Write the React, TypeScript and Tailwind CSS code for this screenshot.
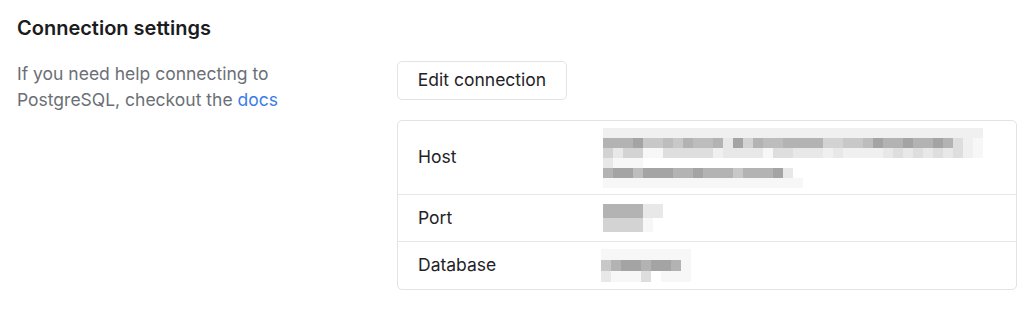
import React from "react";

// blurred values are rendered as pixel blocks, like the redacted screenshot
type BlurRow = { h: number; cells: string };

const shade: Record<string, string> = {
  "0": "#ffffff",
  "1": "#f7f7f7",
  "2": "#f0f0f0",
  "3": "#e8e8e8",
  "4": "#dedede",
  "5": "#d3d3d3",
  "6": "#c8c8c8",
  "7": "#bdbdbd",
  "8": "#b3b3b3",
  "9": "#a4a4a4",
};

const hostRows: BlurRow[] = [
  { h: 10, cells: "22222222222222222222222222222222222222" },
  { h: 10, cells: "88896676877839587788885566798898898421" },
  { h: 10, cells: "53551144444233331443332322223434343421" },
  { h: 10, cells: "31110000000000000000000000000000000000" },
  { h: 10, cells: "89979998898886888930000000000000000000" },
  { h: 10, cells: "11111111111111111111000000000000000000" },
];

const portRows: BlurRow[] = [
  { h: 14, cells: "888833" },
  { h: 14, cells: "555510" },
];

const dbRows: BlurRow[] = [
  { h: 11, cells: "111111111" },
  { h: 11, cells: "689989981" },
  { h: 11, cells: "311140111" },
];

function PixelBlur({ rows }: { rows: BlurRow[] }) {
  return (
    <div className="flex flex-col">
      {rows.map((row, i) => (
        <div key={i} className="flex">
          {row.cells.split("").map((c, j) => (
            <span key={j} className="block w-[10px]" style={{ height: row.h, backgroundColor: shade[c] }} />
          ))}
        </div>
      ))}
    </div>
  );
}

function Row({ label, height, last, children }: { label: string; height: string; last?: boolean; children: React.ReactNode }) {
  return (
    <div className={`flex items-center ${height} ${last ? "" : "border-b border-[#e5e7eb]"}`}>
      <div className="w-[205px] shrink-0 pl-5 text-[17.5px] text-[#1f2328]">{label}</div>
      <div className="flex-1">{children}</div>
    </div>
  );
}

export default function App() {
  return (
    <div className="h-[312px] w-[1035px] bg-white px-[17px] pt-[13px] font-['Inter','Liberation_Sans',sans-serif]">
      <h2 className="text-[20px] font-semibold leading-[30px] text-[#1c1c1e]">Connection settings</h2>

      <div className="mt-[18px] flex pr-[1px]">
        <p className="w-[380px] shrink-0 text-[17.5px] leading-[26px] text-[#6b6f76]">
          If you need help connecting to
          <br />
          PostgreSQL, checkout the <a href="#" className="text-[#3b7de9]">docs</a>
        </p>

        <div className="flex-1">
          <button className="h-[39px] w-[170px] rounded-[5px] border border-[#e3e3e3] bg-white text-[17.5px] text-[#1f2328]">
            Edit connection
          </button>

          <div className="mt-5 rounded-[5px] border border-[#e3e3e3]">
            <Row label="Host" height="h-[74px]">
              <PixelBlur rows={hostRows} />
            </Row>
            <Row label="Port" height="h-[47px]">
              <PixelBlur rows={portRows} />
            </Row>
            <Row label="Database" height="h-[47px]" last>
              <div className="-ml-[2px]">
                <PixelBlur rows={dbRows} />
              </div>
            </Row>
          </div>
        </div>
      </div>
    </div>
  );
}
